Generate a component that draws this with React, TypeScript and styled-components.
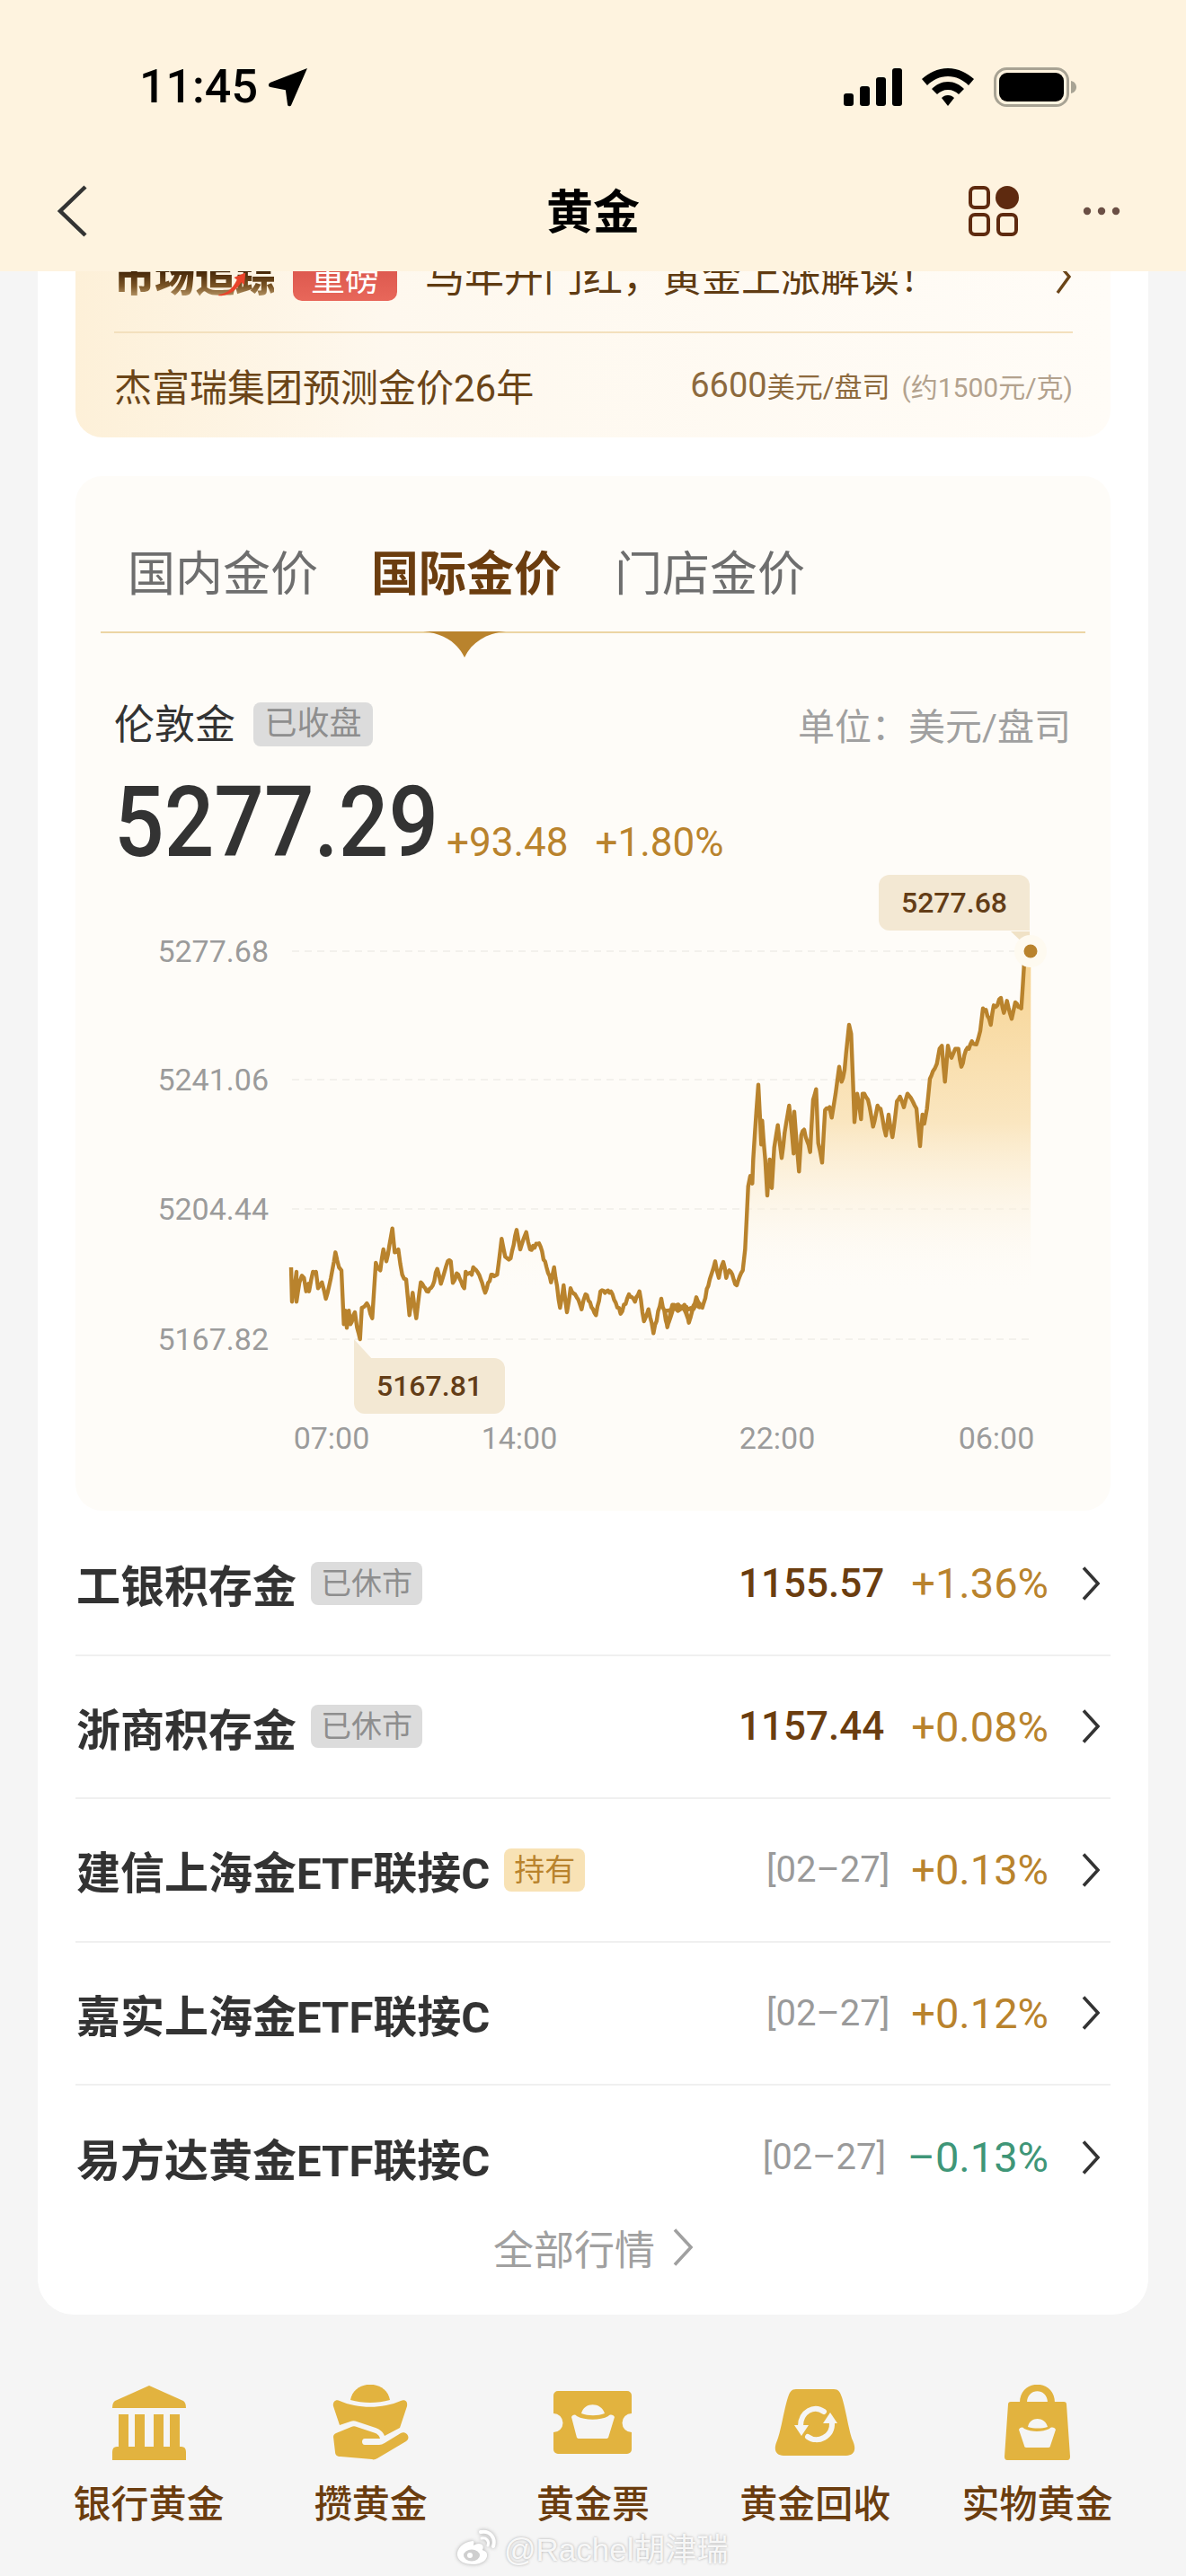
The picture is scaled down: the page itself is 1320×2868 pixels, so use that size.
import React from 'react';
import styled, {createGlobalStyle} from 'styled-components';

const Global = createGlobalStyle`
  html, body {
    margin: 0;
    padding: 0;
    background: #f5f5f5;
  }
  body {
    width: 1320px;
    height: 2868px;
    overflow: hidden;
    font-family: Roboto, "Noto Sans CJK SC", sans-serif;
  }
`;

// chart points were read off the picture, in page coordinates
const leftPts: number[][] = [
    [132,210],[135,325],[150,225],[150,325],[160,260],[168,238],[175,245],[182,290],[190,265],[192,290],[205,225],[215,225],[222,280],[235,260],[248,315],[265,245],[280,160],[292,210],[300,220],[308,400],[315,355],[318,412],[325,355],[330,400],[345,360],[352,410],[362,450],[368,345],[385,330],[403,380],[415,195],[430,220],[440,150],[450,190],[470,80],[478,160],[490,150],[503,235],[516,250],[527,370],[538,295],[550,380],[565,260],[585,290],[605,270],[620,215],[632,265],[655,190],[665,190],[672,262],[685,230],[710,280],[715,225],[735,235],[740,210],[760,235],[780,295],[800,235],[820,235],[835,115],[847,175],[865,180],[885,85],[897,150],[917,92],[930,150],[960,130],[985,210],[1000,260],[1010,210],[1030,345],[1042,270],[1053,360],[1065,280],[1080,300],[1102,350],[1115,300],[1150,370],[1165,290],[1185,290],[1205,300],[1232,365],[1260,300],[1280,325],[1295,290],[1310,390],[1325,350],[1342,430],[1368,315],[1388,405],[1410,335],[1440,340],[1460,390],[1485,315],[1500,340],
];
const midPts: number[][] = [
    [0,235],[8,290],[25,215],[45,235],[65,215],[80,275],[105,190],[125,225],[150,130],[168,70],[180,125],[195,72],[205,125],[215,100],[240,150],[260,100],[268,30],
];
const rightPts: number[][] = [
    [218,1080],[225,1045],[232,1070],[235,990],[240,910],[252,740],[262,940],[265,860],[275,990],[282,1110],[290,990],[297,1085],[305,950],[317,875],[330,985],[340,900],[355,810],[370,970],[372,830],[388,1030],[395,910],[405,890],[425,965],[435,790],[445,755],[452,935],[465,1000],[475,825],[490,815],[497,850],[510,770],[522,680],[530,730],[540,690],[555,540],[562,570],[573,865],[582,770],[595,855],[600,770],[618,790],[635,880],[650,810],[660,820],[678,910],[687,840],[700,915],[715,795],[725,780],[738,815],[750,770],[762,785],[780,820],[792,945],[800,840],[806,870],[815,820],[825,720],[835,695],[848,670],[857,620],[865,610],[875,730],[885,610],[897,650],[910,620],[920,620],[930,680],[945,625],[955,620],[965,595],[980,605],[993,560],[1002,485],[1012,490],[1028,540],[1038,475],[1045,480],[1062,450],[1072,500],[1082,460],[1098,520],[1110,465],[1130,485],[1140,330],[1150,315],[1162,295],
];

const linePts: number[][] = [
    ...leftPts.map(p => [280 + p[0] / 3, 1340 + p[1] / 3]),
    ...midPts.map(p => [740 + p[0] / 3, 1380 + p[1] / 3]),
    ...rightPts.map(p => [760 + p[0] / 3, 960 + p[1] / 3]),
];

// the real line ticks every pixel or so, a little noise between the read points gives that look
let seed = 7;
const noise = () => {
    seed = (seed * 16807) % 2147483647;
    return (seed / 2147483647 - 0.5) * 4.5;
};
const noisyPts: number[][] = [];
linePts.forEach((p, i) => {
    noisyPts.push(p);
    const next = linePts[i + 1];
    if (!next) return;
    const steps = Math.floor(Math.abs(next[0] - p[0]) / 1.6);
    for (let s = 1; s < steps; s++) {
        const t = s / steps;
        noisyPts.push([p[0] + (next[0] - p[0]) * t, p[1] + (next[1] - p[1]) * t + noise()]);
    }
});

const linePath = noisyPts.map((p, i) => `${i ? 'L' : 'M'}${p[0].toFixed(1)} ${p[1].toFixed(1)}`).join(' ');
const areaPath = `${linePath} L1147 1490 L325 1490 Z`;

const axis = [
    {label: '5277.68', y: 1058},
    {label: '5241.06', y: 1201},
    {label: '5204.44', y: 1345},
    {label: '5167.82', y: 1490},
];
const times = [
    {label: '07:00', x: 369},
    {label: '14:00', x: 578},
    {label: '22:00', x: 865},
    {label: '06:00', x: 1109},
];

type RowType = {
    name: string
    tag?: string
    hold?: boolean
    price?: string
    date?: string
    pct: string
    down?: boolean
}
const rows: RowType[] = [
    {name: '工银积存金', tag: '已休市', price: '1155.57', pct: '+1.36%'},
    {name: '浙商积存金', tag: '已休市', price: '1157.44', pct: '+0.08%'},
    {name: '建信上海金ETF联接C', tag: '持有', hold: true, date: '[02–27]', pct: '+0.13%'},
    {name: '嘉实上海金ETF联接C', date: '[02–27]', pct: '+0.12%'},
    {name: '易方达黄金ETF联接C', date: '[02–27]', pct: '–0.13%', down: true},
];

const GOLD = '#e2b33f';
const BG = '#f5f5f5';

const BankIcon = () => (
    <svg width="82" height="83" viewBox="0 0 82 83">
        <path d="M41 0 L79 17 Q82 19 82 25 H0 Q0 19 3 17 Z" fill={GOLD}/>
        <path d="M7 32 H18 V68 H25 V32 H36 V68 H46 V32 H57 V68 H64 V32 H75 V68 H77 Q82 68 82 74 V83 H0 V74 Q0 68 5 68 H7 Z" fill={GOLD}/>
    </svg>
);

const SaveIcon = () => (
    <svg width="86" height="84" viewBox="0 0 86 84">
        <path d="M20 17 C24 -6 60 -6 64 17 C50 21 34 21 20 17 Z" fill={GOLD}/>
        <path d="M1 24 C0 19 4 16 8 18 C28 27 56 27 76 18 C81 16 84 19 83 24 L75 48 L58 57 C56 52 53 50 48 48 L27 41 C25 40 22 40 20 41 L8 45 Z" fill={GOLD}/>
        <path d="M1 58 C1 56 2 55 4 54 L21 47 C23 46 25 46 27 47 L45 53 C49 54 52 56 53 60 H36 C32 60 32 67 36 67 H52 C54 67 56 66 58 65 L76 54 C82 51 88 59 82 63 L50 82 C48 83 46 84 44 83 L9 80 C5 80 3 78 3 75 Z" fill={GOLD}/>
    </svg>
);

const TicketIcon = () => (
    <svg width="87" height="70" viewBox="0 0 87 70">
        <path d="M5 0 H82 a5 5 0 0 1 5 5 V25 a10 10 0 0 0 0 21 V65 a5 5 0 0 1-5 5 H5 a5 5 0 0 1-5-5 V46 a10 10 0 0 0 0-21 V5 a5 5 0 0 1 5-5 Z" fill={GOLD}/>
        <path d="M31 25 C34 12 53 12 57 25 C49 28 39 28 31 25 Z" fill={BG}/>
        <path d="M20 29 C22 26 24 26 26 28 C35 33 52 33 61 28 C63 26 66 26 68 29 L61 52 C60 53 59 53 58 53 H29 C28 53 27 53 26 52 Z" fill={BG}/>
    </svg>
);

const RecycleIcon = () => (
    <svg width="90" height="74" viewBox="0 0 90 74">
        <path d="M24 0 H66 C71 0 73 3 75 9 C80 25 83 48 87 57 C92 68 88 74 80 74 H10 C2 74 -2 68 3 57 C7 48 10 25 15 9 C17 3 19 0 24 0 Z" fill={GOLD}/>
        <path d="M55 25 C44 17 29 25 29 41" fill="none" stroke={BG} strokeWidth="6" strokeLinecap="round"/>
        <path d="M37 53 C48 61 65 53 64 37" fill="none" stroke={BG} strokeWidth="6" strokeLinecap="round"/>
        <path d="M22 40 H38 L30 52 Z" fill={BG}/>
        <path d="M54 38 H70 L62 26 Z" fill={BG}/>
    </svg>
);

const BagIcon = () => (
    <svg width="73" height="84" viewBox="0 0 73 84">
        <path d="M17 20 C17 -7 56 -7 56 20 H48 C48 3 25 3 25 20 Z" fill={GOLD}/>
        <path d="M7 19 H66 Q69 19 69 22 L73 80 Q73 84 70 84 H3 Q0 84 0 80 L4 22 Q4 19 7 19 Z" fill={GOLD}/>
        <path d="M26 47 C28 35 45 35 48 47 C41 49 33 49 26 47 Z" fill={BG}/>
        <path d="M16 50 C18 47 20 47 22 49 C30 53 42 53 50 49 C52 47 55 47 57 50 L51 68 C51 69 50 70 49 70 H24 C23 70 22 69 22 68 Z" fill={BG}/>
    </svg>
);

const navItems = [
    {label: '银行黄金', icon: <BankIcon/>},
    {label: '攒黄金', icon: <SaveIcon/>},
    {label: '黄金票', icon: <TicketIcon/>},
    {label: '黄金回收', icon: <RecycleIcon/>},
    {label: '实物黄金', icon: <BagIcon/>},
];

const Chevron = (props: {color: string, w: number, h: number}) => (
    <svg width={props.w} height={props.h} viewBox={`0 0 ${props.w} ${props.h}`} fill="none">
        <path d={`M2 1.5 L${props.w - 2} ${props.h / 2} L2 ${props.h - 1.5}`} stroke={props.color} strokeWidth="3.6"/>
    </svg>
);

const App = () => {
    return (
        <Page>
            <Global/>
            <Header>
                <StatusBar>
                    <Clock>
                        <span>11:45</span>
                        <svg width="44" height="44" viewBox="0 0 42 42">
                            <path d="M41 1 L24 40 C23 42 20 42 20 39 L18 24 L2 21 C-1 20 -1 18 2 16 Z" fill="#000"/>
                        </svg>
                    </Clock>
                    <StatusIcons>
                        <svg width="65" height="42" viewBox="0 0 65 42">
                            <rect x="0" y="28" width="11" height="14" rx="3" fill="#000"/>
                            <rect x="18" y="20" width="11" height="22" rx="3" fill="#000"/>
                            <rect x="36" y="10" width="11" height="32" rx="3" fill="#000"/>
                            <rect x="54" y="0" width="11" height="42" rx="3" fill="#000"/>
                        </svg>
                        <svg width="58" height="42" viewBox="0 0 58 42">
                            <path d="M29 0 C41 0 50 5 58 12 L52 19 C46 13 38 9 29 9 C20 9 12 13 6 19 L0 12 C8 5 17 0 29 0 Z" fill="#000"/>
                            <path d="M29 15 C36 15 42 18 47 23 L41 29 C38 26 34 24 29 24 C24 24 20 26 17 29 L11 23 C16 18 22 15 29 15 Z" fill="#000"/>
                            <path d="M29 30 C32 30 34 31 36 33 L29 42 L22 33 C24 31 26 30 29 30 Z" fill="#000"/>
                        </svg>
                        <svg width="92" height="44" viewBox="0 0 92 44">
                            <rect x="1.5" y="1.5" width="81" height="41" rx="13" fill="none" stroke="#a8a394" strokeWidth="3"/>
                            <rect x="6" y="6" width="72" height="32" rx="9" fill="#000"/>
                            <path d="M86 15 C90 16 92 19 92 22 C92 25 90 28 86 29 Z" fill="#a8a394"/>
                        </svg>
                    </StatusIcons>
                </StatusBar>
                <NavBar>
                    <svg width="36" height="58" viewBox="0 0 36 58" fill="none">
                        <path d="M32 2 L4 29 L32 56" stroke="#333" strokeWidth="4.5"/>
                    </svg>
                    <Title>黄金</Title>
                    <NavRight>
                        <svg width="56" height="56" viewBox="0 0 56 56" fill="none">
                            <rect x="2" y="2" width="20" height="22" rx="5" stroke="#5e2a0f" strokeWidth="4"/>
                            <circle cx="43" cy="13" r="13" fill="#5e2a0f"/>
                            <rect x="2" y="32" width="20" height="22" rx="5" stroke="#5e2a0f" strokeWidth="4"/>
                            <rect x="33" y="32" width="20" height="22" rx="5" stroke="#5e2a0f" strokeWidth="4"/>
                        </svg>
                        <svg width="42" height="10" viewBox="0 0 42 10">
                            <circle cx="5" cy="5" r="4.2" fill="#6b4f45"/>
                            <circle cx="21" cy="5" r="4.2" fill="#6b4f45"/>
                            <circle cx="37" cy="5" r="4.2" fill="#6b4f45"/>
                        </svg>
                    </NavRight>
                </NavBar>
            </Header>

            <Sheet>
                <Banner>
                    <BannerTop>
                        <LogoWrap>
                            <Logo>市场追踪</Logo>
                            <Swoosh width="34" height="32" viewBox="0 0 50 42">
                                <path d="M2 40 C18 38 26 28 32 16 L27 12 L46 4 L44 24 L39 20 C32 32 20 42 2 42 Z" fill="#e8442a"/>
                            </Swoosh>
                        </LogoWrap>
                        <HeavyTag>重磅</HeavyTag>
                        <News>马年开门红，黄金上涨解读！</News>
                        <svg width="22" height="34" viewBox="0 0 22 34" fill="none">
                            <path d="M6 1 L18 15 L5 33" stroke="#6b4518" strokeWidth="3.4"/>
                        </svg>
                    </BannerTop>
                    <BannerBottom>
                        <Forecast>杰富瑞集团预测金价26年</Forecast>
                        <Target>
                            <TargetNum>6600</TargetNum>
                            <TargetUnit>美元/盘司</TargetUnit>
                            <TargetNote>(约1500元/克)</TargetNote>
                        </Target>
                    </BannerBottom>
                </Banner>

                <ChartCard>
                    <Tabs>
                        <Tab>国内金价</Tab>
                        <Tab $active>国际金价
                            <Notch width="92" height="30" viewBox="0 0 92 30">
                                <path d="M0 0 H92 C70 2 54 12 46 29 C38 12 22 2 0 0 Z" fill="#b9832d"/>
                            </Notch>
                        </Tab>
                        <Tab>门店金价</Tab>
                    </Tabs>
                    <QuoteHead>
                        <QuoteName>
                            <QuoteTitle>伦敦金</QuoteTitle>
                            <StateTag>已收盘</StateTag>
                        </QuoteName>
                        <Unit>单位：美元/盘司</Unit>
                    </QuoteHead>
                    <PriceRow>
                        <BigPrice>5277.29</BigPrice>
                        <Change>+93.48</Change>
                        <Change>+1.80%</Change>
                    </PriceRow>
                    <ChartBox>
                        <svg width="1152" height="680" viewBox="84 960 1152 680">
                            <defs>
                                <linearGradient id="area" gradientUnits="userSpaceOnUse" x1="0" y1="1058" x2="0" y2="1440">
                                    <stop offset="0" stopColor="#f7d391"/>
                                    <stop offset="0.5" stopColor="#fae6c0"/>
                                    <stop offset="1" stopColor="#fefcf8" stopOpacity="0"/>
                                </linearGradient>
                            </defs>
                            {axis.map(a => (
                                <g key={a.label}>
                                    <line x1="325" x2="1147" y1={a.y} y2={a.y} stroke="#f3f1ec" strokeWidth="2" strokeDasharray="8 6"/>
                                    <AxisText x="299" y={a.y + 12} textAnchor="end">{a.label}</AxisText>
                                </g>
                            ))}
                            <path d={areaPath} fill="url(#area)"/>
                            <path d={linePath} fill="none" stroke="#b9832d" strokeWidth="4.4" strokeLinejoin="round"/>
                            <path d="M1125 1036 H1146 V1056 Z" fill="#f0e2c6"/>
                            <path d="M394 1490 L415 1513 H394 Z" fill="#f3e8d3"/>
                            <circle cx="1147" cy="1058" r="18" fill="#fefaf0"/>
                            <circle cx="1147" cy="1058" r="7.5" fill="#b9832d"/>
                            {times.map(t => (
                                <AxisText key={t.label} x={t.x} y="1612" textAnchor="middle">{t.label}</AxisText>
                            ))}
                        </svg>
                        <HighTip>5277.68</HighTip>
                        <LowTip>5167.81</LowTip>
                    </ChartBox>
                </ChartCard>

                <List>
                    {rows.map(r => (
                        <Row key={r.name}>
                            <RowName>{r.name}</RowName>
                            {r.tag && <RowTag $hold={r.hold}>{r.tag}</RowTag>}
                            <RowRight>
                                {r.price && <RowPrice>{r.price}</RowPrice>}
                                {r.date && <RowDate>{r.date}</RowDate>}
                                <RowPct $down={r.down}>{r.pct}</RowPct>
                                <Chevron color="#333" w={20} h={38}/>
                            </RowRight>
                        </Row>
                    ))}
                </List>
                <AllLink>
                    <span>全部行情</span>
                    <Chevron color="#a0a0a0" w={22} h={42}/>
                </AllLink>
            </Sheet>

            <BottomNav>
                {navItems.map(n => (
                    <NavItem key={n.label}>
                        <IconBox>{n.icon}</IconBox>
                        <NavLabel>{n.label}</NavLabel>
                    </NavItem>
                ))}
            </BottomNav>

            <Watermark>
                <WeiboMark width="46" height="42" viewBox="0 0 46 42" fill="none">
                    <path d="M19 14 C8 15 1 23 2 30 C3 37 11 40 20 40 C30 40 36 34 35 29 C35 26 32 25 30 24 C32 20 30 17 26 17 C23 17 21 18 20 19 C21 15 20 14 19 14 Z" fill="#fff"/>
                    <ellipse cx="18" cy="30" rx="9" ry="6.5" fill="#cfcfcf"/>
                    <circle cx="16" cy="30" r="3" fill="#fff"/>
                    <path d="M28 4 C38 2 45 10 42 20" stroke="#fff" strokeWidth="4" strokeLinecap="round"/>
                    <path d="M29 11 C34 10 38 14 36 19" stroke="#fff" strokeWidth="3" strokeLinecap="round"/>
                </WeiboMark>
                <span>@Rachel胡津瑞</span>
            </Watermark>
        </Page>
    );
};

export default App;

const Page = styled.div`
  position: relative;
  width: 1320px;
  height: 2868px;
  background: #f5f5f5;
  overflow: hidden;
`;

const Header = styled.header`
  position: relative;
  z-index: 2;
  height: 302px;
  background: #fef3df;
  padding: 0 75px 0 63px;
  box-sizing: border-box;
`;

const StatusBar = styled.div`
  display: flex;
  justify-content: space-between;
  align-items: center;
  height: 44px;
  padding: 75px 47px 0 92px;
`;

const Clock = styled.div`
  display: flex;
  align-items: center;
  gap: 12px;
  font-size: 52px;
  font-weight: 500;
  color: #000;
  line-height: 44px;
`;

const StatusIcons = styled.div`
  display: flex;
  align-items: center;
  gap: 22px;
`;

const NavBar = styled.div`
  position: relative;
  display: flex;
  justify-content: space-between;
  align-items: center;
  margin-top: 87px;
  height: 58px;
`;

const Title = styled.div`
  position: absolute;
  left: 0;
  right: -12px;
  top: -11px;
  text-align: center;
  font-size: 52px;
  font-weight: 700;
  color: #000;
`;

const NavRight = styled.div`
  display: flex;
  align-items: center;
  gap: 71px;
  margin-right: -2px;
`;

const Sheet = styled.main`
  margin: 0 42px;
  height: 2327px;
  padding: 0 42px;
  box-sizing: border-box;
  background: #fff;
  border-radius: 0 0 40px 40px;
`;

const Banner = styled.section`
  margin-top: -52px;
  margin-bottom: 43px;
  height: 237px;
  padding: 0 42px 0 43px;
  box-sizing: border-box;
  border-radius: 0 0 30px 30px;
  background: linear-gradient(90deg, #fdf0d8 0%, #fef8ee 30%, #fffcf7 100%);
  position: relative;
`;

const BannerTop = styled.div`
  display: flex;
  align-items: center;
  height: 121px;
  box-sizing: border-box;
  border-bottom: 2px solid #f3e0bd;
`;

const LogoWrap = styled.div`
  position: relative;
  width: 178px;
`;

const Logo = styled.div`
  font-size: 45px;
  font-weight: 900;
  line-height: 1;
  white-space: nowrap;
  background: linear-gradient(180deg, #3f2205 30%, #7a5425 70%, #bfa071 100%);
  -webkit-background-clip: text;
  background-clip: text;
  color: transparent;
`;

const Swoosh = styled.svg`
  position: absolute;
  left: 115px;
  top: 12px;
`;

const HeavyTag = styled.div`
  margin-left: 21px;
  width: 116px;
  height: 50px;
  line-height: 50px;
  text-align: center;
  border-radius: 0 0 10px 10px;
  background: linear-gradient(180deg, #d8534a, #e8675a);
  color: #fff;
  font-size: 38px;
`;

const News = styled.div`
  margin: -8px 0 0 31px;
  flex: 1;
  font-size: 44px;
  color: #5f3b12;
  white-space: nowrap;
`;

const BannerBottom = styled.div`
  display: flex;
  justify-content: space-between;
  align-items: center;
  height: 114px;
`;

const Forecast = styled.div`
  font-size: 42px;
  color: #6b4518;
`;

const Target = styled.div`
  display: flex;
  align-items: baseline;
`;

const TargetNum = styled.span`
  font-size: 38px;
  color: #8d6a3e;
`;

const TargetUnit = styled.span`
  font-size: 31px;
  color: #8d6a3e;
`;

const TargetNote = styled.span`
  margin-left: 13px;
  font-size: 30px;
  color: #b3a28e;
`;

const ChartCard = styled.section`
  height: 1152px;
  background: #fefcf8;
  border-radius: 30px;
`;

const Tabs = styled.div`
  position: relative;
  display: flex;
  gap: 59px;
  height: 175px;
  margin: 0 28px;
  padding: 0 30px;
  box-sizing: border-box;
  align-items: flex-end;
  border-bottom: 2px solid #ecd5a4;
`;

const Tab = styled.div<{$active?: boolean}>`
  position: relative;
  width: 212px;
  padding-bottom: 32px;
  font-size: 53px;
  line-height: 62px;
  white-space: nowrap;
  font-weight: ${props => props.$active ? 700 : 400};
  color: ${props => props.$active ? '#6b3d0f' : '#6e6e6e'};
`;

const Notch = styled.svg`
  position: absolute;
  left: 58px;
  top: 94px;
`;

const QuoteHead = styled.div`
  display: flex;
  justify-content: space-between;
  align-items: center;
  margin-top: 76px;
  padding: 0 44px 0 43px;
  height: 50px;
`;

const QuoteName = styled.div`
  display: flex;
  align-items: center;
  gap: 20px;
  font-size: 45px;
  color: #333;
`;

const QuoteTitle = styled.span`
  margin-top: -6px;
`;

const StateTag = styled.div`
  width: 133px;
  height: 49px;
  line-height: 49px;
  text-align: center;
  font-size: 36px;
  color: #8e8e8e;
  background: #dcdcdc;
  border-radius: 8px;
`;

const Unit = styled.div`
  font-size: 41px;
  color: #a0a0a0;
`;

const PriceRow = styled.div`
  display: flex;
  align-items: baseline;
  gap: 30px;
  padding-left: 43px;
  margin-top: 40px;
  height: 90px;
`;

const BigPrice = styled.div`
  width: 340px;
  font-size: 110px;
  font-weight: 500;
  line-height: 90px;
  color: #333;
  white-space: nowrap;
  transform: scaleX(0.89);
  transform-origin: left center;
`;

const Change = styled.div`
  font-size: 44px;
  color: #b9832d;
`;

const ChartBox = styled.div`
  position: relative;
  height: 680px;
`;

const AxisText = styled.text`
  font-family: Roboto, sans-serif;
  font-size: 34px;
  fill: #9b9b9b;
`;

const Tip = styled.div`
  position: absolute;
  width: 168px;
  height: 62px;
  line-height: 62px;
  text-align: center;
  background: #f3e8d3;
  color: #633d17;
  font-size: 32px;
  font-weight: 500;
`;

const HighTip = styled(Tip)`
  left: 894px;
  top: 13px;
  border-radius: 12px 12px 0 12px;
`;

const LowTip = styled(Tip)`
  left: 310px;
  top: 551px;
  border-radius: 0 12px 12px 12px;
`;

const List = styled.div`
  margin-top: 2px;
`;

const Row = styled.div`
  display: flex;
  align-items: center;
  height: 159.5px;
  box-sizing: border-box;
  border-bottom: 2px solid #f0f0f0;
  &:last-child {
    border-bottom: none;
  }
`;

const RowName = styled.div`
  font-size: 49px;
  font-weight: 700;
  color: #333;
  margin-left: 1px;
  white-space: nowrap;
`;

const RowTag = styled.div<{$hold?: boolean}>`
  margin-left: 16px;
  padding: 0 11px;
  height: 48px;
  line-height: 48px;
  font-size: 34px;
  border-radius: 8px;
  color: ${props => props.$hold ? '#b9832d' : '#8e8e8e'};
  background: ${props => props.$hold ? '#f8e2b5' : '#dcdcdc'};
`;

const RowRight = styled.div`
  margin-left: auto;
  display: flex;
  align-items: center;
  padding-right: 12px;
`;

const RowPrice = styled.div`
  font-size: 44px;
  font-weight: 500;
  color: #6b3d0f;
  margin-right: 30px;
`;

const RowDate = styled.div`
  font-size: 40px;
  color: #9a9a9a;
  margin-right: 24px;
`;

const RowPct = styled.div<{$down?: boolean}>`
  font-size: 47px;
  color: ${props => props.$down ? '#3f9678' : '#b9832d'};
  margin-right: 37px;
`;

const AllLink = styled.div`
  display: flex;
  justify-content: center;
  align-items: center;
  gap: 20px;
  margin-top: -12px;
  font-size: 45px;
  color: #a0a0a0;
`;

const BottomNav = styled.nav`
  display: grid;
  grid-template-columns: repeat(5, 1fr);
  margin: 76px 42px 0;
`;

const NavItem = styled.div`
  display: flex;
  flex-direction: column;
  align-items: center;
`;

const IconBox = styled.div`
  display: flex;
  align-items: center;
  justify-content: center;
  height: 88px;
`;

const NavLabel = styled.div`
  margin-top: 20px;
  font-size: 42px;
  font-weight: 500;
  line-height: 56px;
  color: #6b3d0f;
`;

const Watermark = styled.div`
  position: absolute;
  left: 507px;
  top: 2810px;
  display: flex;
  align-items: center;
  gap: 8px;
  font-family: "Liberation Sans", "Noto Sans CJK SC", sans-serif;
  font-size: 35px;
  color: rgba(255, 255, 255, 0.9);
  text-shadow: 0 0 3px #a8a8a8;
`;

const WeiboMark = styled.svg`
  filter: drop-shadow(0 0 2px #a8a8a8);
`;
